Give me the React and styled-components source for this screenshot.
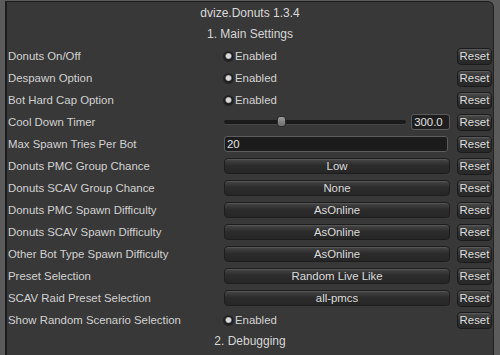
import styled, { createGlobalStyle } from "styled-components"

const Global = createGlobalStyle`
  html, body {
    margin: 0;
    padding: 0;
    background: #5b5b5b;
    overflow: hidden;
  }
  body {
    font-family: "Liberation Sans", Arial, sans-serif;
    font-size: 11.4px;
    color: #d4d4d4;
  }
`

const Window = styled.div`
  margin: 1px 0 0 5px;
  width: 489px;
  height: 400px;
  background: #383838;
  border-top: 1px solid #1c1c1c;
  border-left: 2px solid #1c1c1c;
  border-right: 1px solid #222;
  border-radius: 0 6px 0 0;
  box-sizing: border-box;
`

const Title = styled.div`
  height: 22px;
  line-height: 22px;
  text-align: center;
  font-size: 12px;
  color: #dadada;
`

const Section = styled.div`
  height: 21px;
  line-height: 21px;
  text-align: center;
  font-size: 12px;
  color: #d6d6d6;
`

const Row = styled.div`
  display: grid;
  grid-template-columns: 216px 226px 42px;
  align-items: center;
  height: 22px;
  padding-left: 1px;
`

const Label = styled.div`
  white-space: nowrap;
  color: #d2d2d2;
`

const Control = styled.div`
  display: flex;
  align-items: center;
  gap: 5px;
`

const Toggle = styled.div`
  display: flex;
  align-items: center;
  gap: 2px;
`

const Radio = styled.span`
  width: 9px;
  height: 9px;
  border-radius: 50%;
  background: radial-gradient(circle at 50% 45%, #d8d8d8 0 2.2px, #8a8a8a 2.8px, #1c1c1c 3.6px);
  box-shadow: 0 0 0 1px #262626;
`

const Dropdown = styled.div`
  width: 226px;
  height: 16px;
  line-height: 14px;
  box-sizing: border-box;
  text-align: center;
  border-radius: 4px;
  border: 1px solid #1d1d1d;
  background: linear-gradient(#474747, #2c2c2c 45%, #262626);
  box-shadow: inset 0 1px 0 #555;
  color: #dcdcdc;
`

const TextField = styled.div`
  width: 224px;
  height: 16px;
  line-height: 14px;
  box-sizing: border-box;
  padding-left: 2px;
  border-radius: 3px;
  border: 1px solid #5c5c5c;
  background: #1c1c1c;
  color: #e0e0e0;
`

const Track = styled.div`
  position: relative;
  width: 183px;
  height: 4px;
  border-radius: 2px;
  background: #1b1b1b;
  box-shadow: 0 1px 0 #454545;
`

const Thumb = styled.span`
  position: absolute;
  top: -4px;
  width: 9px;
  height: 11px;
  border-radius: 3px;
  background: linear-gradient(#9a9a9a, #6e6e6e);
  border: 1px solid #2a2a2a;
  box-sizing: border-box;
`

const ValueBox = styled.div`
  width: 39px;
  height: 16px;
  line-height: 14px;
  box-sizing: border-box;
  padding-left: 2px;
  border-radius: 3px;
  border: 1px solid #5c5c5c;
  background: #1e1e1e;
  color: #e0e0e0;
`

const Reset = styled.div`
  grid-column: 3;
  justify-self: start;
  width: 35px;
  height: 17px;
  line-height: 15px;
  box-sizing: border-box;
  text-align: center;
  border-radius: 4px;
  border: 1px solid #1b1b1b;
  background: linear-gradient(#4a4a4a, #2e2e2e 50%, #282828);
  box-shadow: inset 0 1px 0 #5a5a5a;
  color: #dedede;
  margin-left: 7px;
`

const rows = [
  { label: "Donuts On/Off", type: "toggle" },
  { label: "Despawn Option", type: "toggle" },
  { label: "Bot Hard Cap Option", type: "toggle" },
  { label: "Cool Down Timer", type: "slider", value: "300.0", pos: 0.29 },
  { label: "Max Spawn Tries Per Bot", type: "text", value: "20" },
  { label: "Donuts PMC Group Chance", type: "drop", value: "Low" },
  { label: "Donuts SCAV Group Chance", type: "drop", value: "None" },
  { label: "Donuts PMC Spawn Difficulty", type: "drop", value: "AsOnline" },
  { label: "Donuts SCAV Spawn Difficulty", type: "drop", value: "AsOnline" },
  { label: "Other Bot Type Spawn Difficulty", type: "drop", value: "AsOnline" },
  { label: "Preset Selection", type: "drop", value: "Random Live Like" },
  { label: "SCAV Raid Preset Selection", type: "drop", value: "all-pmcs" },
  { label: "Show Random Scenario Selection", type: "toggle" },
]

function Field({ row }) {
  if (row.type === "toggle")
    return (
      <Toggle>
        <Radio />
        <span>Enabled</span>
      </Toggle>
    )
  if (row.type === "slider")
    return (
      <>
        <Track>
          <Thumb style={{ left: `${row.pos * 183}px` }} />
        </Track>
        <ValueBox>{row.value}</ValueBox>
      </>
    )
  if (row.type === "text") return <TextField>{row.value}</TextField>
  return <Dropdown>{row.value}</Dropdown>
}

export default function App() {
  return (
    <>
      <Global />
      <Window>
        <Title>dvize.Donuts 1.3.4</Title>
        <Section>1. Main Settings</Section>
        {rows.map((row) => (
          <Row key={row.label}>
            <Label>{row.label}</Label>
            <Control>
              <Field row={row} />
            </Control>
            <Reset>Reset</Reset>
          </Row>
        ))}
        <Section>2. Debugging</Section>
      </Window>
    </>
  )
}
